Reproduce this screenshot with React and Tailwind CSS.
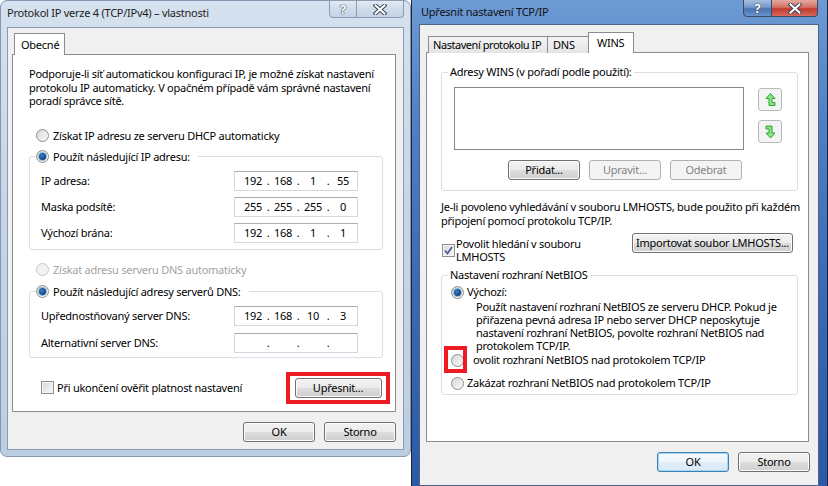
import { Fragment } from "react"

const btn = "h-[20px] flex items-center justify-center rounded-[3px] border border-[#707070] bg-[linear-gradient(to_bottom,#f2f2f2_0%,#ebebeb_50%,#dddddd_51%,#cfcfcf_100%)] shadow-[inset_0_0_0_1px_#fcfcfc] whitespace-nowrap"
const btnOff = "h-[20px] flex items-center justify-center rounded-[3px] border border-[#adb2b5] bg-[#f4f4f4] text-[#838383] whitespace-nowrap"
const btnDef = "h-[20px] flex items-center justify-center rounded-[3px] border border-[#3c7fb1] bg-[linear-gradient(to_bottom,#f4f9fd_0%,#edf5fb_50%,#e1eef8_51%,#d8e9f6_100%)] shadow-[inset_0_0_0_1px_#a6d8f6] whitespace-nowrap"

function Radio({ checked, disabled }) {
  if (disabled) {
    return <span className="w-[13px] h-[13px] shrink-0 rounded-full border border-[#c8c8c8] bg-[#f2f2f2]" />
  }
  return (
    <span className="w-[13px] h-[13px] shrink-0 rounded-full border border-[#8e8f8f] bg-[linear-gradient(135deg,#d6d6d6,#fbfbfb)] flex items-center justify-center">
      {checked && <span className="w-[7px] h-[7px] rounded-full bg-[radial-gradient(circle_at_40%_40%,#3a86d0_0%,#14457f_60%,#0b2f5c_100%)] shadow-[0_0_0_1px_#8bbbe6]" />}
    </span>
  )
}

function Check({ checked }) {
  return (
    <span className="w-[13px] h-[13px] shrink-0 border border-[#8e8f8f] bg-[linear-gradient(135deg,#d8d8d8,#f8f8f8)] shadow-[inset_0_0_0_1px_#f4f4f4] flex items-center justify-center">
      {checked && (
        <svg width="11" height="11" viewBox="0 0 11 11">
          <path d="M2 5.5 L4.5 8.5 L9 2" fill="none" stroke="#4b5f91" strokeWidth="1.8" />
        </svg>
      )}
    </span>
  )
}

function IpBox({ parts }) {
  return (
    <div className="w-[124px] h-[20px] shrink-0 border border-[#d5d7dc] border-t-[#abadb3] bg-white flex items-center pl-[5px]">
      {parts.map((p, i) => (
        <Fragment key={i}>
          {i > 0 && <span className="w-[4px] text-center">.</span>}
          <span className="w-[26px] text-center">{p}</span>
        </Fragment>
      ))}
    </div>
  )
}

function TitleButtons({ active }) {
  const help = active
    ? "w-[29px] h-[18px] border border-[#3a4a66] rounded-bl-[4px] bg-[linear-gradient(to_bottom,#a6bfe2,#7499cc_45%,#4b74b2_55%,#6a93c9)] flex items-center justify-center"
    : "w-[28px] h-[18px] border border-[#8d9cb1] rounded-bl-[4px] bg-[linear-gradient(to_bottom,#e2eaf4,#d0dcea_50%,#c3d2e5)] flex items-center justify-center"
  const close = active
    ? "w-[46px] h-[18px] border border-l-0 border-[#3a4a66] rounded-br-[4px] bg-[linear-gradient(to_bottom,#e5a99f,#d27366_45%,#c03b2c_55%,#d7695c)] flex items-center justify-center"
    : "w-[47px] h-[18px] border border-l-0 border-[#8d9cb1] rounded-br-[4px] bg-[linear-gradient(to_bottom,#e2eaf4,#d0dcea_50%,#c3d2e5)] flex items-center justify-center"
  return (
    <div className="flex -mt-px self-start">
      <div className={help}>
        <span className="font-bold text-[13px] leading-none text-white [text-shadow:0_0_1px_#3c4656,0_0_1px_#3c4656,0_0_1px_#3c4656]">?</span>
      </div>
      <div className={close}>
        <svg width="14" height="11" viewBox="0 0 14 11">
          <path d="M2.5 1.5 L11.5 9.5 M11.5 1.5 L2.5 9.5" stroke="#3c4656" strokeWidth="4" strokeLinecap="square" />
          <path d="M2.5 1.5 L11.5 9.5 M11.5 1.5 L2.5 9.5" stroke="#ffffff" strokeWidth="2" strokeLinecap="square" />
        </svg>
      </div>
    </div>
  )
}

function ArrowUp() {
  return (
    <svg width="11" height="14" viewBox="0 0 11 14">
      <path d="M5.5 0.5 L10 5.5 L7 5.5 L7 9.5 L10 9.5 L10 12.5 L4 12.5 L4 5.5 L1 5.5 Z" fill="#86e386" stroke="#36a436" strokeWidth="1" />
    </svg>
  )
}

function ArrowDown() {
  return (
    <svg width="11" height="14" viewBox="0 0 11 14">
      <path d="M5.5 13 L10 8 L7 8 L7 1 L1 1 L1 4 L4 4 L4 8 L1 8 Z" fill="#86e386" stroke="#36a436" strokeWidth="1" />
    </svg>
  )
}

function LeftWindow() {
  const ipRows = [
    ["IP adresa:", ["192", "168", "1", "55"]],
    ["Maska podsítě:", ["255", "255", "255", "0"]],
    ["Výchozí brána:", ["192", "168", "1", "1"]],
  ]
  const dnsRows = [
    ["Upřednostňovaný server DNS:", ["192", "168", "10", "3"]],
    ["Alternativní server DNS:", ["", "", "", ""]],
  ]
  return (
    <div className="w-[411px] h-[457px] shrink-0 flex flex-col px-[6px] pb-[6px] rounded-[7px] border border-[#8597b0] bg-[linear-gradient(to_bottom,#d5e1ee,#c6d6e8_45%,#bccee3)]">
      <div className="h-[26px] flex justify-between">
        <div className="pt-[5px] text-[#1e1e1e] whitespace-nowrap">Protokol IP verze 4 (TCP/IPv4) – vlastnosti</div>
        <TitleButtons />
      </div>
      <div className="flex-1 bg-[#f0f0f0] border border-[#8b9bb0] pl-[4px] pr-[7px] pt-[5px] flex flex-col">
        <div className="flex">
          <div className="ml-[2px] w-[51px] h-[22px] -mb-px relative border border-b-0 border-[#898c95] bg-white flex items-center pl-[6px]">Obecné</div>
        </div>
        <div className="h-[358px] border border-[#898c95] bg-white pl-[16px] pr-[5px] pt-[12px] flex flex-col">
          <p className="leading-[13.5px] whitespace-nowrap">
            Podporuje-li síť automatickou konfiguraci IP, je možné získat nastavení<br />
            protokolu IP automaticky. V opačném případě vám správné nastavení<br />
            poradí správce sítě.
          </p>
          <div className="mt-[20px] h-[16px] flex items-center gap-[4px] pl-[7px]">
            <Radio />
            <span>Získat IP adresu ze serveru DHCP automaticky</span>
          </div>
          <fieldset className="mt-[5px] mr-[7px] border border-[#d5dfe5] rounded-[3px]">
            <legend className="ml-[6px] pr-[8px]">
              <div className="h-[16px] flex items-center gap-[4px]">
                <Radio checked />
                <span>Použít následující IP adresu:</span>
              </div>
            </legend>
            <div className="mt-[6px] pb-[6px] pl-[11px] pr-[24px] flex flex-col gap-[6px]">
              {ipRows.map(([label, parts]) => (
                <div key={label} className="h-[20px] flex items-center justify-between">
                  <span>{label}</span>
                  <IpBox parts={parts} />
                </div>
              ))}
            </div>
          </fieldset>
          <div className="mt-[12px] h-[16px] flex items-center gap-[4px] pl-[7px] text-[#a3a3a3]">
            <Radio disabled />
            <span>Získat adresu serveru DNS automaticky</span>
          </div>
          <fieldset className="mt-[6px] mr-[7px] border border-[#d5dfe5] rounded-[3px]">
            <legend className="ml-[6px] pr-[8px]">
              <div className="h-[16px] flex items-center gap-[4px]">
                <Radio checked />
                <span>Použít následující adresy serverů DNS:</span>
              </div>
            </legend>
            <div className="mt-[6px] pb-[4px] pl-[11px] pr-[24px] flex flex-col gap-[7px]">
              {dnsRows.map(([label, parts]) => (
                <div key={label} className="h-[20px] flex items-center justify-between">
                  <span>{label}</span>
                  <IpBox parts={parts} />
                </div>
              ))}
            </div>
          </fieldset>
          <div className="mt-[14px] flex items-center justify-between">
            <div className="pl-[12px] flex items-center gap-[3px]">
              <Check />
              <span>Při ukončení ověřit platnost nastavení</span>
            </div>
            <div className="w-[104px] h-[32px] border-[4px] border-[#ed1c24] flex items-center justify-center">
              <div className={btn + " w-[87px]"}>Upřesnit...</div>
            </div>
          </div>
        </div>
        <div className="mt-[10px] flex justify-end gap-[9px]">
          <div className={btn + " w-[72px]"}>OK</div>
          <div className={btn + " w-[72px]"}>Storno</div>
        </div>
      </div>
    </div>
  )
}

function RightWindow() {
  return (
    <div className="w-[417px] h-[490px] shrink-0 flex flex-col pl-[7px] pr-[8px] pb-[4px] border-x border-[#1b2536] bg-[linear-gradient(to_bottom,#6d9ad3,#4f80c4_25%,#3a69b5_60%,#2b59a7)]">
      <div className="h-[24px] flex justify-between">
        <div className="pl-[2px] pt-[5px] text-[#111] whitespace-nowrap">Upřesnit nastavení TCP/IP</div>
        <div className="mr-px flex">
          <TitleButtons active />
        </div>
      </div>
      <div className="flex-1 bg-[#f0f0f0] border border-[#4d6385] pl-[6px] pr-[9px] pt-[8px] flex flex-col">
        <div className="h-[20px] flex items-end ml-[2px] relative -mb-px whitespace-nowrap">
          <div className="w-[120px] h-[17px] border border-b-0 border-[#898c95] bg-[linear-gradient(to_bottom,#f4f4f4,#e4e4e4)] flex items-center pl-[4px] tracking-[-0.45px]">Nastavení protokolu IP</div>
          <div className="w-[41px] h-[17px] border border-b-0 border-l-0 border-[#898c95] bg-[linear-gradient(to_bottom,#f4f4f4,#e4e4e4)] flex items-center pl-[5px]">DNS</div>
          <div className="w-[46px] h-[21px] -ml-px border border-b-0 border-[#898c95] bg-white flex items-center pl-[8px]">WINS</div>
        </div>
        <div className="h-[390px] border border-[#898c95] bg-white pl-[14px] pr-[10px] pt-[12px] flex flex-col">
          <fieldset className="border border-[#d5dfe5] rounded-[3px]">
            <legend className="ml-[6px] px-[2px] leading-[14px]">Adresy WINS (v pořadí podle použití):</legend>
            <div className="mt-[8px] flex items-start">
              <div className="ml-[12px] w-[290px] h-[63px] border border-[#828790] bg-white" />
              <div className="ml-[14px] mt-px flex flex-col gap-[9px]">
                <div className="w-[24px] h-[23px] rounded-[3px] border border-[#b5babd] bg-[#f4f4f4] flex items-center justify-center">
                  <ArrowUp />
                </div>
                <div className="w-[24px] h-[23px] rounded-[3px] border border-[#b5babd] bg-[#f4f4f4] flex items-center justify-center">
                  <ArrowDown />
                </div>
              </div>
            </div>
            <div className="mt-[10px] pb-[10px] ml-[66px] flex gap-[9px]">
              <div className={btn + " w-[72px]"}>Přidat...</div>
              <div className={btnOff + " w-[72px]"}>Upravit...</div>
              <div className={btnOff + " w-[72px]"}>Odebrat</div>
            </div>
          </fieldset>
          <p className="mt-[9px] leading-[14px] whitespace-nowrap">
            Je-li povoleno vyhledávání v souboru LMHOSTS, bude použito při každém<br />
            připojení pomocí protokolu TCP/IP.
          </p>
          <div className="mt-[5px] flex items-start justify-between">
            <div className="ml-px mt-[4px] flex items-center gap-px">
              <Check checked />
              <span className="leading-[13px]">Povolit hledání v souboru<br />LMHOSTS</span>
            </div>
            <div className={btn + " w-[161px] mr-[5px]"}>Importovat soubor LMHOSTS...</div>
          </div>
          <fieldset className="mt-[5px] border border-[#d5dfe5] rounded-[3px]">
            <legend className="ml-[6px] px-[2px] leading-[14px]">Nastavení rozhraní NetBIOS</legend>
            <div className="mt-[2px] h-[16px] flex items-center gap-[3px] pl-[9px]">
              <Radio checked />
              <span>Výchozí:</span>
            </div>
            <p className="pl-[34px] leading-[13px] whitespace-nowrap">
              Použít nastavení rozhraní NetBIOS ze serveru DHCP. Pokud je<br />
              přiřazena pevná adresa IP nebo server DHCP neposkytuje<br />
              nastavení rozhraní NetBIOS, povolte rozhraní NetBIOS nad<br />
              protokolem TCP/IP.
            </p>
            <div className="relative h-[16px] flex items-center pl-[9px]">
              <Radio />
              <span className="ml-[9px]">ovolit rozhraní NetBIOS nad protokolem TCP/IP</span>
              <span className="absolute left-[2px] top-[-6px] w-[23px] h-[27px] border-[4px] border-[#ed1c24]" />
            </div>
            <div className="mt-[7px] mb-[3px] h-[16px] flex items-center gap-[3px] pl-[9px]">
              <Radio />
              <span>Zakázat rozhraní NetBIOS nad protokolem TCP/IP</span>
            </div>
          </fieldset>
        </div>
        <div className="mt-[10px] -mr-px flex justify-end gap-[9px]">
          <div className={btnDef + " w-[72px]"}>OK</div>
          <div className={btn + " w-[72px]"}>Storno</div>
        </div>
      </div>
    </div>
  )
}

export default function App() {
  return (
    <div className="w-[828px] h-[486px] overflow-hidden bg-white flex items-start font-['Noto_Sans',sans-serif] text-[11px] leading-[14px] tracking-[-0.25px] text-black">
      <LeftWindow />
      <RightWindow />
    </div>
  )
}
